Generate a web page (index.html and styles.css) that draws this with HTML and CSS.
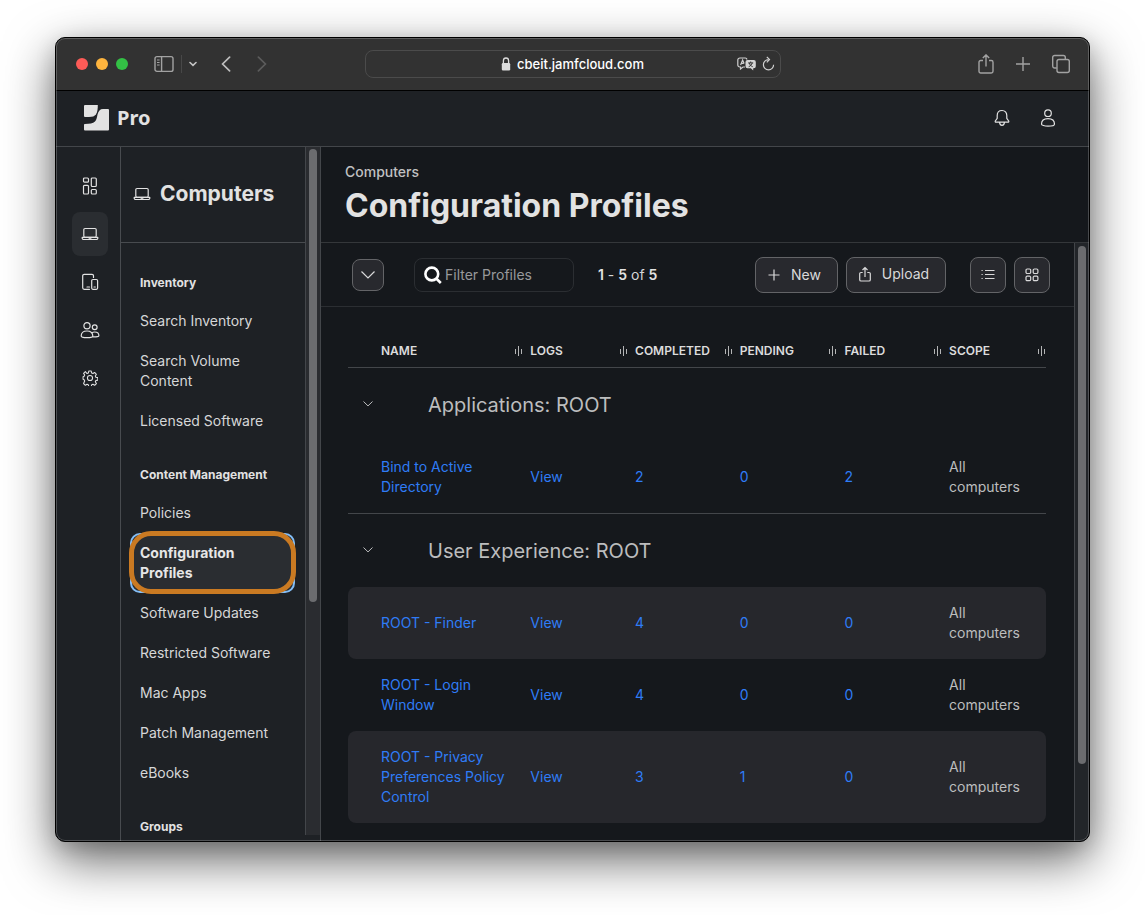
FILE: index.html
```html
<!DOCTYPE html>
<html lang="en">
<head>
<meta charset="utf-8">
<title>Configuration Profiles</title>
<link rel="stylesheet" href="styles.css">
</head>
<body>
<svg class="defs" width="0" height="0" aria-hidden="true">
  <symbol id="laptop" viewBox="0 0 18 18"><rect x="2.8" y="3.500" width="12.400" height="8.800" rx="1.200"/><path d="M1.200 12.400h15.600v.9a1.500 1.500 0 0 1-1.500 1.200H2.700a1.500 1.500 0 0 1-1.500-1.200zM7.400 12.600c.3.700.8.700 1.600.7s1.300 0 1.600-.7"/></symbol>
  <symbol id="sort" viewBox="0 0 8 12"><path d="M.5 4v5M3.500 1v10M6.500 4v5"/></symbol>
  <symbol id="chev" viewBox="0 0 12 12"><path d="M1.500 2.500 6 6.900 10.500 2.500"/></symbol>
</svg>
<div class="window">
  <header class="chrome">
    <div class="chrome-left">
      <span class="light red"></span><span class="light yellow"></span><span class="light green"></span>
      <button class="cbtn side" aria-label="Sidebar"><svg width="20" height="18" viewBox="0 0 20 18"><rect x="1" y="1.600" width="18" height="14.800" rx="2" /><path d="M7.600 2v14"/><path class="thin" d="M3 5h2.600M3 7.500h2.600M3 10h2.600"/></svg></button>
      <span class="sep"></span>
      <button class="cbtn down" aria-label="Tab groups"><svg width="8" height="6" viewBox="0 0 8 6"><path d="M1 1.500 4 4.400 7 1.500"/></svg></button>
      <button class="cbtn back" aria-label="Back"><svg width="10" height="16" viewBox="0 0 10 16"><path d="M8.600 1.200 1.600 8l7 6.800"/></svg></button>
      <button class="cbtn fwd" aria-label="Forward" disabled><svg width="10" height="16" viewBox="0 0 10 16"><path d="M1.400 1.200 8.400 8l-7 6.800"/></svg></button>
    </div>
    <div class="address">
      <svg class="lock" width="10" height="14" viewBox="0 0 10 14"><rect x=".8" y="6" width="8.400" height="7.500" rx="1.200"/><path d="M2.400 6.500V3.800a2.600 2.800 0 0 1 5.200 0v2.700"/></svg>
      <span class="url">cbeit.jamfcloud.com</span>
      <span class="address-tools">
        <button class="cbtn" aria-label="Translate"><svg width="19" height="14" viewBox="0 0 19 14"><path d="M8 10H6L3.500 12v-2H2.800A2 2 0 0 1 .8 8V3a2 2 0 0 1 2-2h5.500a2 2 0 0 1 1.700 1.500M3.600 8l2-5 1.500 3.600M4.300 6.300h2.400"/><path class="fill" d="M10.500 3h6.300a2 2 0 0 1 2 2v4.300a2 2 0 0 1-2 2h-.6v2.300l-2.400-2.300h-3.300a2 2 0 0 1-2-2V5a2 2 0 0 1 2-2z"/><path class="ink" d="M11.200 5.900h5M13.700 4.500v1.400M15.200 6c-.4 1.600-1.800 3-3.500 3.700M12.200 6c.4 1.600 1.800 3 3.500 3.700"/></svg></button>
        <button class="cbtn" aria-label="Reload"><svg width="13" height="16" viewBox="0 0 13 16"><path d="M6.500 3.600a5.100 5.100 0 1 0 5.100 5.100M4.800.9l2.700 2.700-2.700 2.700"/></svg></button>
      </span>
    </div>
    <div class="chrome-right">
      <button class="cbtn" aria-label="Share"><svg width="16" height="20" viewBox="0 0 16 20"><path d="M5 6.500H2.700A1.700 1.700 0 0 0 1 8.200v9.100A1.700 1.700 0 0 0 2.700 19h10.600a1.700 1.700 0 0 0 1.700-1.700V8.200a1.700 1.700 0 0 0-1.700-1.700H11M8 12.500V1M4.800 4 8 .9 11.200 4"/></svg></button>
      <button class="cbtn" aria-label="New tab"><svg width="14" height="14" viewBox="0 0 14 14"><path d="M7 0v14M0 7h14"/></svg></button>
      <button class="cbtn" aria-label="Tabs"><svg width="18" height="20" viewBox="0 0 18 20"><rect x="5" y="5.500" width="12.300" height="13" rx="2"/><path d="M4.800 14H2.600A1.900 1.900 0 0 1 .7 12.100V3.400a1.900 1.900 0 0 1 1.900-1.900h8.800a1.900 1.900 0 0 1 1.900 1.900v2"/></svg></button>
    </div>
  </header>

  <header class="appbar">
    <svg class="logo" width="25" height="26" viewBox="0 0 25 26"><path d="M1 0h12.800c0 4-.3 7-1.800 9.300C10.500 11.500 8.500 12 5 12H1a1 1 0 0 1-1-1V1a1 1 0 0 1 1-1z"/><path d="M24 4a1 1 0 0 1 1 1v19.500a1 1 0 0 1-1 1H1a1 1 0 0 1-1-1V20c0-.6.400-1 1-1 4.500 0 8-.3 10-2.400 1.800-1.900 1.900-4.300 2.500-7C14.400 6 16 4 19 4z"/></svg>
    <span class="brand">Pro</span>
    <span class="appbar-tools">
      <button class="plain" aria-label="Notifications"><svg class="ic" width="18" height="18" viewBox="0 0 18 18"><path d="M9 1.500c-3 0-4.800 2.200-4.800 5v2.800L2.300 12c-.3.700 0 1.200.7 1.200h12c.7 0 1-.5.700-1.200l-1.900-2.700V6.500c0-2.800-1.800-5-4.800-5zM6.500 13.400c.3 2 1.200 3 2.500 3s2.200-1 2.500-3"/></svg></button>
      <button class="plain" aria-label="Account"><svg class="ic" width="18" height="18" viewBox="0 0 18 18"><circle cx="9" cy="4.200" r="3.300"/><path d="M2.500 15.200c0-3.600 2.600-5.500 6.500-5.500s6.500 1.900 6.500 5.500c0 1-2.700 1.900-6.500 1.900s-6.500-.9-6.500-1.900z"/></svg></button>
    </span>
  </header>

  <div class="body">
    <nav class="rail" aria-label="Sections">
      <a href="#" aria-label="Dashboard"><svg class="ic" width="18" height="18" viewBox="0 0 18 18"><rect x="2.500" y="1" width="5" height="4.200" rx="1"/><rect x="10.300" y="1" width="5" height="8.500" rx="1"/><rect x="2.500" y="8.300" width="5" height="8.700" rx="1"/><rect x="10.300" y="12.500" width="5" height="4.500" rx="1"/></svg></a>
      <a href="#" class="on" aria-label="Computers"><svg class="ic" width="18" height="18"><use href="#laptop"/></svg></a>
      <a href="#" aria-label="Devices"><svg class="ic" width="18" height="18" viewBox="0 0 18 18"><path d="M12.500 4.500V2.800A1.500 1.500 0 0 0 11 1.300H3.200A1.500 1.500 0 0 0 1.700 2.800v12a1.500 1.500 0 0 0 1.500 1.500h5.300M6 14h2.500"/><rect x="10.700" y="6.500" width="5.900" height="9.800" rx="1.200"/><path d="M13 14h1.300"/></svg></a>
      <a href="#" aria-label="Users"><svg class="ic" width="20" height="18" viewBox="0 0 20 18"><circle cx="7" cy="4.700" r="3.100"/><circle cx="14.700" cy="6.300" r="2.400"/><path d="M1.200 15c0-3 2.300-5 5.800-5s5.800 2 5.800 5c0 .9-2.300 1.700-5.800 1.700S1.200 15.900 1.200 15zM11.800 12c.8-.7 1.700-1 2.900-1 2.600 0 4.200 1.500 4.200 3.700 0 .8-1.900 1.300-6.100 1.200"/></svg></a>
      <a href="#" aria-label="Settings"><svg class="ic" width="16" height="16" viewBox="0 0 18 18"><circle cx="9" cy="9" r="2.900"/><path d="M7.600 1.200h2.800l.5 2.200 1.400.6 1.900-1.200 2 2-1.200 1.900.6 1.400 2.200.5v2.800l-2.200.5-.6 1.400 1.200 1.900-2 2-1.900-1.200-1.400.6-.5 2.200H7.600l-.5-2.200-1.400-.6-1.900 1.200-2-2L3 12.300l-.6-1.400-1.200-.5V7.600l1.200-.5L3 5.700 1.800 3.800l2-2L5.700 4l1.400-.6z"/></svg></a>
    </nav>

    <aside class="sidebar">
      <div class="side-content">
        <h2 class="side-title"><svg class="ic" width="18" height="18"><use href="#laptop"/></svg>Computers</h2>
        <nav class="side-nav" aria-label="Computers">
          <h3>Inventory</h3>
          <a href="#">Search Inventory</a>
          <a href="#">Search Volume Content</a>
          <a href="#">Licensed Software</a>
          <h3>Content Management</h3>
          <a href="#">Policies</a>
          <a href="#" class="current" aria-current="page">Configuration Profiles</a>
          <a href="#">Software Updates</a>
          <a href="#">Restricted Software</a>
          <a href="#">Mac Apps</a>
          <a href="#">Patch Management</a>
          <a href="#">eBooks</a>
          <h3>Groups</h3>
        </nav>
      </div>
      <div class="scrollbar side-scroll"><span class="thumb"></span></div>
    </aside>

    <main class="main">
      <div class="page-head">
        <p class="crumb">Computers</p>
        <h1>Configuration Profiles</h1>
      </div>
      <div class="page-body">
        <div class="page-content">
          <div class="toolbar">
            <button class="btn drop" aria-label="Options"><svg width="16" height="16" viewBox="0 0 16 16"><path d="M1.500 4.500 8 11l6.500-6.500"/></svg></button>
            <label class="search"><svg width="18" height="18" viewBox="0 0 18 18"><circle cx="7.800" cy="8" r="6.400"/><path d="m12.300 12.500 4.500 4.500"/></svg><input type="text" placeholder="Filter Profiles" aria-label="Filter Profiles"></label>
            <p class="count"><b>1</b> - <b>5</b> of <b>5</b></p>
            <div class="actions">
              <button class="btn new"><svg width="12" height="12" viewBox="0 0 12 12"><path d="M6 .5v11M.5 6h11"/></svg>New</button>
              <button class="btn upload"><svg width="12" height="16" viewBox="0 0 12 16"><path d="M3.700 6.500H2A1.300 1.300 0 0 0 .7 7.800v5.900A1.300 1.300 0 0 0 2 15h8a1.300 1.300 0 0 0 1.300-1.300V7.800A1.300 1.300 0 0 0 10 6.500H8.300M6 11V1.700M3.500 4 6 1.500 8.500 4"/></svg>Upload</button>
              <span class="views">
                <button class="btn square" aria-label="List view"><svg width="14" height="12" viewBox="0 0 14 12"><path d="M4 1.500h9.500M4 5.500h9.500M4 9.500h9.500M.5 1.500h1.200M.5 5.500h1.200M.5 9.500h1.200"/></svg></button>
                <button class="btn square" aria-label="Grid view"><svg width="14" height="14" viewBox="0 0 14 14"><rect x="1" y="1" width="4.700" height="4.500" rx="1.200"/><rect x="8.200" y="1" width="4.700" height="4.500" rx="1.200"/><rect x="1" y="8.200" width="4.700" height="4.500" rx="1.200"/><rect x="8.200" y="8.200" width="4.700" height="4.500" rx="1.200"/></svg></button>
              </span>
            </div>
          </div>
          <table class="profiles">
            <colgroup><col class="c-exp"><col class="c-name"><col class="c-num"><col class="c-num"><col class="c-num"><col class="c-num"><col></colgroup>
            <thead>
              <tr>
                <th></th>
                <th><span>Name<svg class="sort"><use href="#sort"/></svg></span></th>
                <th><span>Logs<svg class="sort"><use href="#sort"/></svg></span></th>
                <th><span>Completed<svg class="sort"><use href="#sort"/></svg></span></th>
                <th><span>Pending<svg class="sort"><use href="#sort"/></svg></span></th>
                <th><span>Failed<svg class="sort"><use href="#sort"/></svg></span></th>
                <th><span>Scope<svg class="sort"><use href="#sort"/></svg></span></th>
              </tr>
            </thead>
            <tbody>
              <tr class="group"><td colspan="7"><div><button class="plain" aria-label="Collapse"><svg width="12" height="12"><use href="#chev"/></svg></button>Applications: ROOT</div></td></tr>
              <tr class="last"><td></td><td><a href="#">Bind to Active Directory</a></td><td><a href="#">View</a></td><td><a href="#">2</a></td><td><a href="#">0</a></td><td><a href="#">2</a></td><td>All computers</td></tr>
              <tr class="group"><td colspan="7"><div><button class="plain" aria-label="Collapse"><svg width="12" height="12"><use href="#chev"/></svg></button>User Experience: ROOT</div></td></tr>
              <tr class="shade"><td></td><td><a href="#">ROOT - Finder</a></td><td><a href="#">View</a></td><td><a href="#">4</a></td><td><a href="#">0</a></td><td><a href="#">0</a></td><td>All computers</td></tr>
              <tr><td></td><td><a href="#">ROOT - Login Window</a></td><td><a href="#">View</a></td><td><a href="#">4</a></td><td><a href="#">0</a></td><td><a href="#">0</a></td><td>All computers</td></tr>
              <tr class="shade"><td></td><td><a href="#">ROOT - Privacy Preferences Policy Control</a></td><td><a href="#">View</a></td><td><a href="#">3</a></td><td><a href="#">1</a></td><td><a href="#">0</a></td><td>All computers</td></tr>
            </tbody>
          </table>
        </div>
        <div class="scrollbar main-scroll"><span class="thumb"></span></div>
      </div>
    </main>
  </div>
</div>
</body>
</html>
```
FILE: styles.css
```css
* { box-sizing: border-box; }
body {
  margin: 0;
  height: 100vh;
  padding: 37px 55px 73px;
  background: #fff;
  font: 14px/20px Inter, "Liberation Sans", sans-serif;
  color: #d6d7d8;
}
h1, h2, h3, p { margin: 0; }
button { font: inherit; color: inherit; margin: 0; }
a { color: inherit; text-decoration: none; }
svg { display: block; flex: none; fill: none; stroke: currentColor; }
.defs { position: absolute; }

.window {
  position: relative;
  display: flex;
  flex-direction: column;
  height: 100%;
  border: 1px solid #000;
  border-radius: 10px;
  overflow: hidden;
  background: #1e2125;
  box-shadow: 0 18px 50px rgba(0, 0, 0, .6), 0 6px 20px rgba(0, 0, 0, .15);
}
.window::after {
  content: "";
  position: absolute;
  inset: 0;
  border-radius: 9px;
  box-shadow: inset 0 0 0 1px rgba(255, 255, 255, .22);
  pointer-events: none;
}

/* browser chrome */
.chrome {
  flex: none;
  display: grid;
  grid-template-columns: 1fr minmax(0, 416px) 1fr;
  align-items: center;
  height: 53px;
  background: #323232;
  border-bottom: 1px solid #000;
}
.chrome-left { display: flex; align-items: center; padding-left: 20px; }
.light { width: 12px; height: 12px; border-radius: 50%; margin-right: 8px; }
.red { background: #fc5b57; }
.yellow { background: #fdb43e; }
.green { background: #33c145; }
.cbtn { display: flex; padding: 0; border: 0; background: none; color: #a2a2a2; stroke-width: 1.4; }
.side { margin-left: 18px; }
.side .thin { stroke-width: 1; }
.sep { width: 1px; height: 18px; margin: 0 7px; background: #484848; }
.down { color: #c4c4c4; stroke-width: 1.6; stroke-linecap: round; }
.back { margin-left: 24px; color: #bdbdbd; stroke-width: 1.7; stroke-linecap: round; }
.fwd { margin-left: 26px; color: #5b5b5b; stroke-width: 1.7; stroke-linecap: round; }
.address {
  position: relative;
  display: flex;
  align-items: center;
  justify-content: center;
  gap: 6px;
  height: 28px;
  border: 1px solid #4b4b4b;
  border-radius: 8px;
}
.lock { color: #dcdcdc; stroke-width: 1.3; }
.lock rect { fill: currentColor; stroke: none; }
.url { font-size: 13px; font-weight: 500; color: #fff; }
.address-tools { position: absolute; right: 5px; display: flex; align-items: center; gap: 6px; }
.address-tools .cbtn { color: #cfcfcf; stroke-width: 1.2; }
.fill { fill: #d4d4d4; stroke: none; }
.ink { stroke: #323232; stroke-width: 1; }
.chrome-right { display: flex; align-items: center; justify-content: flex-end; gap: 22px; padding-right: 19px; }

/* application bar */
.appbar {
  flex: none;
  display: flex;
  align-items: center;
  height: 56px;
  padding: 0 32px 2px 28px;
  border-bottom: 1px solid #43464a;
}
.logo { fill: #e2e2e2; stroke: none; }
.brand { margin-left: 8px; font: 700 20px/24px "Noto Sans", "Open Sans", sans-serif; color: #e2e2e2; }
.appbar-tools { display: flex; gap: 28px; margin-left: auto; }
.plain { display: flex; padding: 0; border: 0; background: none; }
.ic { stroke-width: 1.2; stroke-linejoin: round; stroke-linecap: round; color: #e2e2e2; }

.body { flex: 1; display: flex; min-height: 0; }
.rail {
  flex: none;
  display: flex;
  flex-direction: column;
  align-items: center;
  gap: 4px;
  width: 65px;
  padding: 17px 0 0 3px;
  border-right: 1px solid #484b4f;
}
.rail a { display: flex; align-items: center; justify-content: center; width: 36px; height: 44px; border-radius: 8px; }
.rail .on { background: #2a2d31; }

.sidebar { flex: none; display: flex; width: 200px; border-right: 1px solid #43464a; }
.side-content { flex: 1; overflow: hidden; }
.side-title {
  display: flex;
  align-items: center;
  gap: 9px;
  height: 96px;
  padding: 0 0 2px 12px;
  border-bottom: 1px solid #484b4f;
  font-size: 21px;
  font-weight: 700;
  color: #e2e2e2;
}
.side-nav { padding: 6px 10px 0 9px; }
.side-nav h3 { padding: 24px 10px 8px; font-size: 12px; font-weight: 700; line-height: 20px; color: #e2e2e2; }
.side-nav a { display: block; padding: 10px; }
.side-nav .current {
  position: relative;
  border-radius: 10px;
  background: #2a2d31;
  box-shadow: inset 0 0 0 2px #83bdf5;
  font-weight: 700;
  color: #e6e6e6;
}
.side-nav .current::after {
  content: "";
  position: absolute;
  inset: -2px -1px -1px;
  border: 5px solid #ca7a22;
  border-radius: 22px;
}
.scrollbar { flex: none; width: 15px; border-left: 1px solid #43464a; background: #2a2c30; }
.thumb { display: block; width: 8px; margin-left: 3px; border-radius: 4px; background: #6b6c6f; }
.side-scroll { margin-bottom: 6px; padding-top: 2px; }
.side-scroll .thumb { height: 66%; }
.main-scroll { background: #222529; padding-top: 3px; }
.main-scroll .thumb { height: 87%; }

/* page */
.main { flex: 1; display: flex; flex-direction: column; min-width: 0; background: #15181c; }
.page-head { flex: none; height: 96px; padding: 15px 24px 0; border-bottom: 1px solid #34373a; }
.crumb { font-weight: 500; color: #c0c1c2; }
h1 { margin-top: 4px; font-size: 32px; line-height: 40px; font-weight: 700; color: #e2e2e2; }
.page-body { flex: 1; display: flex; min-height: 0; }
.page-content { flex: 1; min-width: 0; overflow: hidden; }
.toolbar { display: flex; align-items: center; height: 64px; padding: 0 24px 0 31px; border-bottom: 1px solid #2b2e32; }
.btn {
  display: flex;
  align-items: center;
  justify-content: center;
  height: 36px;
  padding: 0;
  border: 1px solid #636467;
  border-radius: 8px;
  background: #28292e;
  color: #d9d9da;
  stroke-width: 1.2;
}
.drop { width: 32px; height: 32px; }
.search {
  display: flex;
  align-items: center;
  gap: 3px;
  width: 160px;
  height: 34px;
  margin-left: 30px;
  padding-left: 9px;
  border: 1px solid #2b2e32;
  border-radius: 8px;
}
.search svg { color: #fff; stroke-width: 2.6; }
.search input { flex: 1; min-width: 0; padding: 0; border: 0; outline: 0; background: none; font: inherit; color: #d6d7d8; }
.search input::placeholder { color: #98999b; opacity: 1; }
.count { margin-left: 24px; }
.count b { font-weight: 600; color: #e2e2e2; }
.actions { display: flex; gap: 8px; margin-left: auto; }
.new, .upload { gap: 11px; padding-right: 4px; }
.new { width: 83px; }
.upload { width: 100px; padding-bottom: 1px; }
.square { width: 36px; }
.views { display: flex; gap: 8px; margin-left: 16px; }

.profiles { width: calc(100% - 55px); margin-left: 27px; table-layout: fixed; border-collapse: separate; border-spacing: 0; }
.c-exp { width: 33px; }
.c-name { width: 21.4%; }
.c-num { width: 15%; }
th {
  height: 61px;
  padding: 0 0 6px;
  border-bottom: 1px solid #43464a;
  vertical-align: bottom;
  text-align: left;
  font-size: 12px;
  font-weight: 600;
  text-transform: uppercase;
  color: #dcdcdc;
}
th span { display: flex; align-items: center; justify-content: space-between; padding-right: 7px; line-height: 20px; }
th:last-child span { padding-right: 0; }
.sort { width: 8px; height: 12px; stroke-width: 1; color: #b4b5b6; shape-rendering: crispEdges; }
td { padding: 16px 20px 16px 0; color: #bcbdbe; }
td a { color: #2f7cf6; }
.group td { height: 73px; padding: 0; font-size: 20px; color: #bcbdbe; }
.group div { display: flex; align-items: center; gap: 54px; padding-left: 14px; }
.last td { border-bottom: 1px solid #43464a; }
.shade td { background: #26272c; }
.shade td:first-child { border-radius: 8px 0 0 8px; }
.shade td:last-child { border-radius: 0 8px 8px 0; }
```
